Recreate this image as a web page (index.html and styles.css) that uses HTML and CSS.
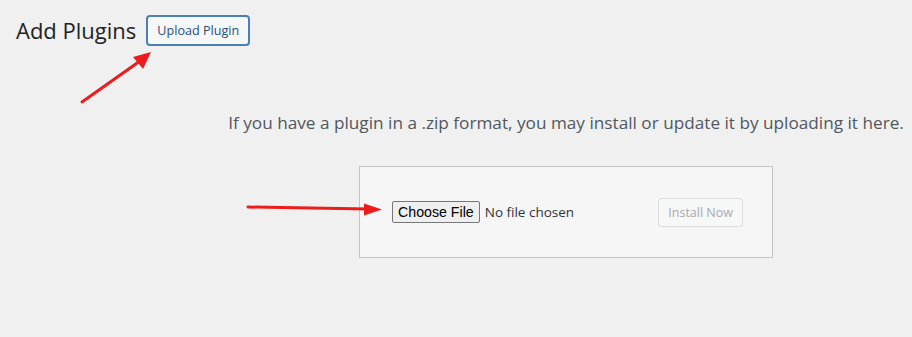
FILE: index.html
```html
<!DOCTYPE html>
<html lang="en">
<head>
  <meta charset="UTF-8" />
  <title>Add Plugins</title>
  <link rel="stylesheet" href="styles.css">
</head>
<body>
  <div class="wrap">
    <div class="page-head">
      <h1>Add Plugins</h1>
      <a class="title-action" href="#">Upload Plugin</a>
    </div>

    <div class="upload-plugin">
      <p class="install-help">If you have a plugin in a .zip format, you may install or update it by uploading it here.</p>
      <form class="upload-form">
        <label class="file-pick">
          <span class="file-btn">Choose File</span>
          <span class="file-name">No file chosen</span>
        </label>
        <button type="button" class="install-btn" disabled>Install Now</button>
      </form>
    </div>
  </div>

  <!-- red pointer arrows drawn over the page -->
  <svg class="arrows" width="912" height="337" viewBox="0 0 912 337">
    <line x1="82" y1="102" x2="140" y2="61" stroke="#ec1c1c" stroke-width="3" stroke-linecap="round" />
    <polygon points="151,52 133,57 143,69" fill="#ec1c1c" />
    <line x1="248" y1="207" x2="368" y2="209" stroke="#ec1c1c" stroke-width="3" stroke-linecap="round" />
    <polygon points="382,209.5 364,203.5 364,215.5" fill="#ec1c1c" />
  </svg>
</body>
</html>
```

FILE: styles.css
```css
html, body {
  margin: 0;
  padding: 0;
  height: 100%;
  background: #f0f0f1;
  font-family: "Open Sans", "Noto Sans", sans-serif;
  color: #1d2327;
  overflow: hidden;
  position: relative;
}

.wrap {
  padding: 15px 0 0 16px;
}

.page-head {
  display: flex;
  align-items: center;
  gap: 10px;
}

.page-head h1 {
  margin: 0;
  font-size: 22px;
  font-weight: 400;
  line-height: 31px;
}

.title-action {
  display: inline-block;
  padding: 0 9px;
  height: 27px;
  line-height: 27px;
  font-size: 12.6px;
  color: #1f4f7d;
  text-decoration: none;
  border: 2px solid #4a80b3;
  border-radius: 4px;
  background: #f6f7f7;
}

.upload-plugin {
  display: flex;
  flex-direction: column;
  align-items: center;
  padding-left: 204px;
}

.install-help {
  margin: 0;
  padding-top: 65px;
  font-size: 17.2px;
  color: #50575e;
  white-space: nowrap;
}

.upload-form {
  box-sizing: border-box;
  width: 414px;
  height: 92px;
  margin-top: 32px;
  padding: 0 29px 0 32px;
  display: flex;
  align-items: center;
  justify-content: space-between;
  background: #f6f6f6;
  border: 1px solid #c3c4c7;
}

.file-pick {
  display: flex;
  align-items: center;
  gap: 5px;
  font-family: "Liberation Sans", Arial, sans-serif;
  font-size: 14.2px;
  color: #1d2327;
}

.file-btn {
  padding: 1px 5px;
  height: 18px;
  line-height: 18px;
  background: #efefef;
  border: 1px solid #767676;
  border-radius: 2px;
  color: #000;
}

.file-name {
  font-family: "Open Sans", "Noto Sans", sans-serif;
  font-size: 13.5px;
  color: #2c3338;
}

.install-btn {
  padding: 0 9px;
  height: 29px;
  font-family: "Open Sans", "Noto Sans", sans-serif;
  font-size: 12.5px;
  color: #a7aaad;
  background: #f6f7f7;
  border: 1px solid #dcdcde;
  border-radius: 3px;
}

.arrows {
  position: absolute;
  top: 0;
  left: 0;
  pointer-events: none;
}
```
